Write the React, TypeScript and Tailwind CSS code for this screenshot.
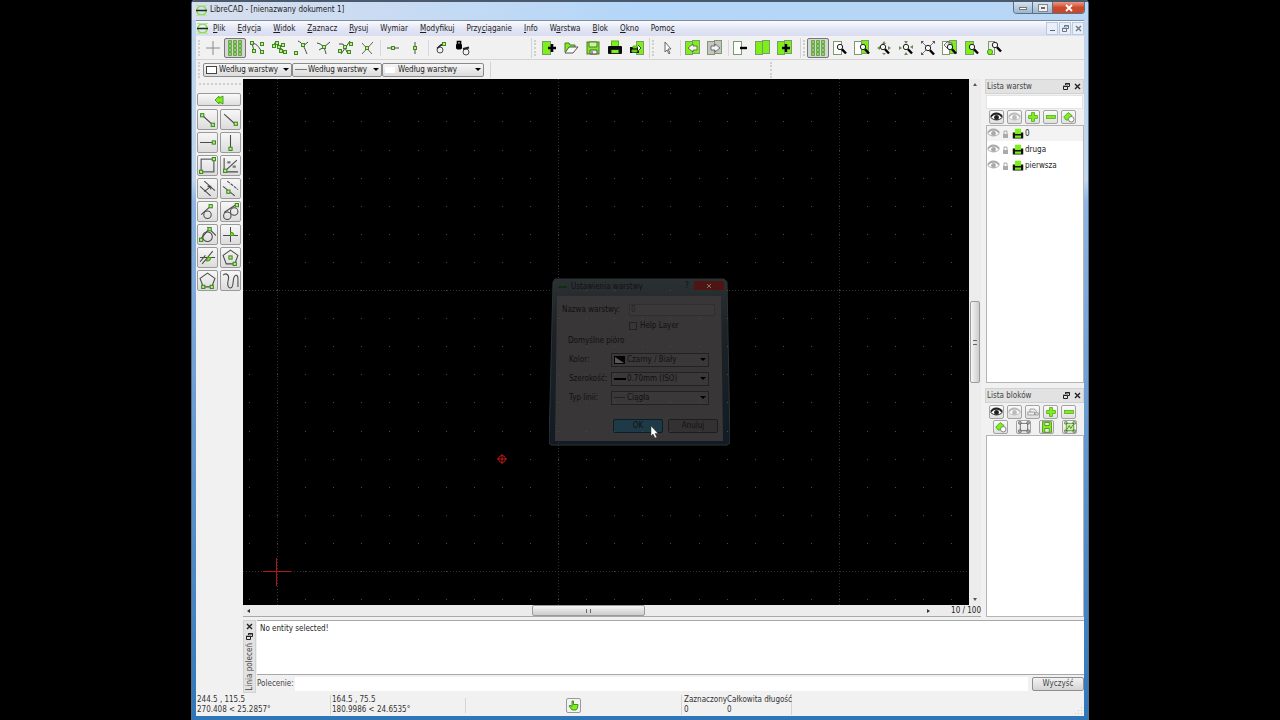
import type { CSSProperties, ReactNode } from 'react'

const LIME = '#7df01a'
const DARK = '#222'

/* ---------- icon parts ---------- */

function Icon({ size = 16, children }: { size?: number; children: ReactNode }) {
  return (
    <svg width={size} height={size} viewBox="0 0 16 16" fill="none" stroke="#4a4a4a" strokeWidth="1" className="shrink-0" aria-hidden="true">
      {children}
    </svg>
  )
}

function Nodes({ at }: { at: number[][] }) {
  return (
    <g fill="#b9f08c" stroke="#3f8a1e">
      {at.map(([x, y]) => (
        <rect key={`${x}-${y}`} x={x - 1.5} y={y - 1.5} width="3" height="3" />
      ))}
    </g>
  )
}

function Lens({ x = 6, y = 4 }: { x?: number; y?: number }) {
  return (
    <g transform={`translate(${x} ${y})`}>
      <circle cx="3" cy="3" r="2.7" fill="#f4f4f4" stroke="#222" />
      <path d="M5 5.2 9 9.5" stroke="#000" strokeWidth="2.4" />
    </g>
  )
}

const Sheet = ({ x = 1, y = 1, w = 10, fill = LIME }: { x?: number; y?: number; w?: number; fill?: string }) => (
  <rect x={x + 0.5} y={y + 0.5} width={w} height="13" fill={fill} stroke="#7d9a6c" />
)

const gridIcon = (
  <Icon>
    <g fill="#b9f08c" stroke="#4d9a2a">
      {[0, 1, 2].flatMap(c => [0, 1, 2, 3].map(r => (
        <rect key={`${c}${r}`} x={1.7 + c * 5} y={0.7 + r * 4} width="2.6" height="2.6" />
      )))}
    </g>
  </Icon>
)

const printerIcon = (
  <Icon>
    <rect x="4.5" y="1" width="7" height="7" fill={LIME} stroke="#58b014" />
    <path d="M2 7h12v6H2z" fill="#0b0b0b" stroke="#0b0b0b" strokeWidth="2" strokeLinejoin="round" />
    <rect x="4" y="9.5" width="8" height="4" fill={LIME} stroke="#222" />
  </Icon>
)

const arrow = (d: string, fill: string) => <path d={d} fill={fill} stroke="#555" strokeWidth="0.8" />

/* ---------- toolbar icons ---------- */

const SNAP: (ReactNode | 'sep')[] = [
  <Icon><path d="M8 1v14M1 8h14" stroke="#888" /></Icon>,
  gridIcon,
  <Icon><path d="M3 3c6 1 7 5 10 9M3 3c1 3 1 5 2 8" /><Nodes at={[[3, 3], [13, 4], [5, 11], [13, 12]]} /></Icon>,
  <Icon><path d="M3 3c6 2 7 6 11 10" /><Nodes at={[[3, 6], [6, 3], [8, 7], [12, 5], [10, 11], [14, 12]]} /></Icon>,
  <Icon><path d="M5 1c5 2 6 6 9 13M15 2 9 7" /><Nodes at={[[3, 13], [10, 5]]} /></Icon>,
  <Icon><path d="M2 3c6 1 8 6 9 11M15 2 9 7l-5 3" /><Nodes at={[[9, 7]]} /></Icon>,
  <Icon><path d="M2 4h4l5 10M13 1 4 14" /><Nodes at={[[8, 7], [14, 4], [3, 11], [12, 12]]} /></Icon>,
  <Icon><path d="m3 3 10 11M14 2 3 14" stroke="#666" /><Nodes at={[[8, 8]]} /></Icon>,
  'sep',
  <Icon><path d="M2 8h12" /><Nodes at={[[8, 8]]} /></Icon>,
  <Icon><path d="M8 2v12" /><Nodes at={[[8, 8]]} /></Icon>,
  'sep',
  <Icon><circle cx="7" cy="10" r="3" /><path d="M4 8.500c2-2 4-4 7-5" stroke="#222" strokeWidth="1.500" /><Nodes at={[[11, 4]]} /></Icon>,
  <Icon>
    <rect x="1.500" y="4" width="5" height="5" rx="1" fill="#000" stroke="#000" />
    <path d="M2.500 4V1.500h3V4" stroke="#000" strokeWidth="1.600" />
    <circle cx="11" cy="12" r="3" /><path d="m8 9 6-1.500" stroke="#222" strokeWidth="2" />
  </Icon>,
]

const FILE: ReactNode[] = [
  <Icon><Sheet x={1} w={8} /><path d="M7 8h8M11 4v8" stroke="#000" strokeWidth="2.6" /></Icon>,
  <Icon><path d="M2 12V3h4l1 2h5v2" fill={LIME} stroke="#4c7b26" /><path d="m2 13 4-6h9l-5 6z" fill="#fafafa" stroke="#555" /></Icon>,
  <Icon><rect x="2" y="2" width="12" height="12" fill={LIME} stroke="#4c7b26" /><path d="M4 2h8v5H4z" fill="#c9f59f" stroke="#4c7b26" /><path d="M5 10h7v4H5z" fill="#eee" stroke="#555" /><path d="M7 11v3" /></Icon>,
  printerIcon,
  <Icon><Sheet x={7} w={7} /><path d="M2 8h7v4H2z" fill="#111" stroke="#111" strokeWidth="2" /><path d="M4 6h4v2H4zM3 10h5v2H3z" fill={LIME} stroke="#58b014" /><path d="m9 5 3 3-3 3" fill="#fff" /></Icon>,
]

const EDIT: (ReactNode | 'sep')[] = [
  <Icon><path d="M6 2v10l2-2 2 4 1-1-2-4h3z" fill="#fff" stroke="#666" /></Icon>,
  'sep',
  <Icon><Sheet x={0} w={7} /><Sheet x={7} y={0} w={7} />{arrow('M3 8l5-4v2h4v4H8v2z', '#f4f4f4')}</Icon>,
  <Icon><Sheet x={0} w={7} fill="#c4c4c4" /><Sheet x={7} y={0} w={7} fill="#c4c4c4" />{arrow('M13 8 8 4v2H4v4h4v2z', '#f4f4f4')}</Icon>,
  'sep',
  <Icon><Sheet x={0} w={8} fill="#fff" /><path d="M7 8h7" stroke="#000" strokeWidth="2.4" /></Icon>,
  <Icon><Sheet x={0} w={7} /><Sheet x={7} y={0} w={7} /></Icon>,
  <Icon><Sheet x={0} w={7} /><Sheet x={7} y={0} w={7} /><path d="M5 8h8M9 4v8" stroke="#000" strokeWidth="2.4" /></Icon>,
]

const VIEW: ReactNode[] = [
  gridIcon,
  <Icon><Sheet x={1} w={8} fill="#fff" /><Lens x={5} /></Icon>,
  <Icon><Sheet x={0} w={7} fill="#fff" /><Sheet x={7} y={0} w={7} /><Lens x={6} /></Icon>,
  <Icon><path d="m8 1-2 3h4zM1 8l3-2v4zM15 8l-3-2v4zM8 15l-2-2h4z" fill="#6a8f4c" stroke="none" /><Lens x={4} /></Icon>,
  <Icon><path d="M8 4 6 1h4zM4 8 1 6v4zM12 7l3-2v4zM8 12l-2 3h4z" fill="#6a8f4c" stroke="none" /><Lens x={5} /></Icon>,
  <Icon><path d="m2 2 12 12M14 2 2 14" stroke="#777" /><path d="M1 1h3L1 4zM15 1v3l-3-3zM1 15v-3l3 3z" fill="#555" stroke="none" /><Lens x={5} y={5} /></Icon>,
  <Icon><Sheet x={0} w={7} fill="#fff" /><Sheet x={7} y={0} w={7} />{arrow('M2 5l4-4v2h4v4H6v2z', '#eee')}<Lens x={5} /></Icon>,
  <Icon><Sheet x={1} w={8} /><Lens x={5} /></Icon>,
  <Icon><Sheet x={2} w={6} fill="#eee" /><circle cx="4" cy="12" r="2.6" fill={LIME} stroke="#4c9a1e" /><Lens x={6} y={2} /></Icon>,
]

const DRAW: { name: string; icon: ReactNode }[] = [
  { name: 'Linia', icon: <><path d="m3 4 10 9" /><Nodes at={[[3, 4], [13, 13]]} /></> },
  { name: 'Linia pod kątem', icon: <><path d="m2 3 10 9" /><Nodes at={[[13, 12]]} /></> },
  { name: 'Pozioma', icon: <><path d="M1 8h13" /><Nodes at={[[14, 8]]} /></> },
  { name: 'Pionowa', icon: <><path d="M8 1v12" /><Nodes at={[[8, 14]]} /></> },
  { name: 'Prostokąt', icon: <><rect x="2" y="2" width="12" height="12" /><Nodes at={[[14, 2], [2, 14]]} /></> },
  { name: 'Dwusieczna', icon: <><path d="M2 1v13h13M2 14 14 3" /><path d="M5 5h3M10 9h3" strokeWidth="2" stroke="#777" /><Nodes at={[[3, 13]]} /></> },
  { name: 'Równoległa', icon: <><path d="m1 6 10 9M5 1l10 9M5 11l6-5M8 6h3v3" /></> },
  { name: 'Równoległa przez punkt', icon: <><path d="m1 6 11 9" /><path d="m5 1 10 8" strokeDasharray="3 1" /><Nodes at={[[6, 11]]} /></> },
  { name: 'Styczna', icon: <><circle cx="8" cy="11" r="3.5" /><path d="m2 11 9-8" /><Nodes at={[[11, 3]]} /></> },
  { name: 'Styczna do okręgów', icon: <><circle cx="5" cy="12" r="3.5" /><circle cx="11.500" cy="8" r="3.5" /><path d="m2 9 12-8" /><Nodes at={[[14, 2]]} /></> },
  { name: 'Styczna prostopadła', icon: <><circle cx="8" cy="10" r="4.5" /><path d="m1 13 9-11M8 1l8 8" /><Nodes at={[[2, 13], [10, 3]]} /></> },
  { name: 'Prostopadła', icon: <><path d="M1 9h14M8 1v14" /><path d="M8 6a3 3 0 0 1 3 3H8z" fill={LIME} stroke="#4c9a1e" /></> },
  { name: 'Względny kąt', icon: <><path d="M1 8h14M3 14 13 2M1 12l5-6" /><path d="M8 8h3a3 3 0 0 1-4 3z" fill={LIME} stroke="#4c9a1e" /></> },
  { name: 'Wielokąt środek', icon: <><path d="m8 1 7 5-3 8H4L1 6z" /><Nodes at={[[8, 8], [12, 14]]} /></> },
  { name: 'Wielokąt krawędź', icon: <><path d="m8 1 7 5-3 8H4L1 6z" /><Nodes at={[[4, 14], [12, 14]]} /></> },
  { name: 'Odręczna', icon: <path d="M1 3c3-3 6 0 5 4s-1 8 2 8 2-5 3-9 4-4 4 0v8" /> },
]

const eye = (color: string) => (
  <Icon size={13}>
    <path d="M1 8c3-5 10-6 14 0-4 4-10 4-14 0z" fill="#fff" stroke={color} strokeWidth="1.2" />
    <path d="M1 7c3-5 10-6 14 0" stroke={color} strokeWidth="2" />
    <circle cx="8" cy="8" r="3" fill={color} stroke="none" />
  </Icon>
)
const plus = <Icon size={12}><path d="M6 2h4v4h4v4h-4v4H6v-4H2V6h4z" fill={LIME} stroke="#55a51c" /></Icon>
const minus = <Icon size={12}><rect x="2" y="6" width="12" height="4" fill={LIME} stroke="#55a51c" /></Icon>
const modify = <Icon size={12}><path d="m1 8 6-6 5 4-3 6H4z" fill={LIME} stroke="#4a8f1c" /><circle cx="11" cy="11" r="3.6" fill="#fff" stroke="#666" /></Icon>
const rename = <Icon size={12}><path d="M1 8h9v4H1zM4 8V4h6l3 4M11 9h4v3h-4z" fill="#eee" stroke="#888" /></Icon>
const editBlock = <Icon size={12}><rect x="3" y="3" width="10" height="10" /><path d="M1 1h3v3H1zM12 1h3v3h-3zM1 12h3v3H1zM12 12h3v3h-3z" fill="#ddd" /></Icon>
const saveBlock = <Icon size={12}><rect x="2" y="1" width="12" height="14" fill={LIME} stroke="#4c7b26" /><path d="M5 2h6v4H5zM5 10h6v5H5z" fill="#dff5cc" stroke="#4c7b26" /></Icon>
const insertBlock = <Icon size={12}><rect x="3" y="3" width="10" height="10" fill="#c8f3a0" stroke="#3f8a1e" /><path d="m4 11 3-5 2 4 3-5M1 1h3v3H1zM12 1h3v3h-3zM1 12h3v3H1zM12 12h3v3h-3z" stroke="#3f6a1e" /></Icon>

/* ---------- small controls ---------- */

function Handle() {
  return <div className="mx-[2px] h-4 w-0 border-l-2 border-dotted border-[#cfcfcf]" />
}

function ToolButton({ label, pressed, children }: { label: string; pressed?: boolean; children: ReactNode }) {
  return (
    <button
      aria-label={label}
      className={`flex h-5 w-[22px] shrink-0 items-center justify-center ${pressed ? 'rounded-xs border border-[#777] bg-[#d6d6d6]' : ''}`}
    >
      {children}
    </button>
  )
}

function ToolGroup({ name, items, pressed }: { name: string; items: (ReactNode | 'sep')[]; pressed?: number }) {
  return (
    <div className="flex items-center" role="toolbar" aria-label={name}>
      {items.map((item, i) =>
        item === 'sep'
          ? <div key={i} className="mr-px ml-[2px] h-4 border-l border-[#d8d8d8]" />
          : <ToolButton key={i} label={`${name} ${i + 1}`} pressed={i === pressed}>{item}</ToolButton>
      )}
    </div>
  )
}

function PenSelect({ label, className, swatch }: { label: string; className: string; swatch: ReactNode }) {
  return (
    <div className={`relative ${className}`}>
      <select aria-label={label} className="block h-[14px] w-full appearance-none rounded-xs border border-[#8a8a8a] bg-linear-to-b from-[#f6f6f6] to-[#dcdcdc] pl-[15px] leading-[12px]">
        <option>Według warstwy</option>
      </select>
      <span className="pointer-events-none absolute inset-y-0 left-[3px] flex items-center">{swatch}</span>
      <span className="pointer-events-none absolute top-[5px] right-[3px] border-x-[3px] border-t-[3px] border-x-transparent border-t-black" />
    </div>
  )
}

function SmallButton({ label, children }: { label: string; children: ReactNode }) {
  return (
    <button aria-label={label} className="flex h-[14px] w-[15px] items-center justify-center rounded-xs border border-[#a3a3a3] bg-linear-to-b from-[#fbfbfb] to-[#e0e0e0]">
      {children}
    </button>
  )
}

function DockTitle({ children }: { children: ReactNode }) {
  return (
    <div className="flex h-[15px] shrink-0 items-center border border-[#d2d2d2] bg-[#e2e2e2] pl-px text-[#444]">
      <h2 className="flex-1">{children}</h2>
      <button aria-label="Odepnij" className="px-[2px]"><RestoreGlyph /></button>
      <button aria-label="Zamknij" className="px-[2px]"><CloseGlyph /></button>
    </div>
  )
}

const RestoreGlyph = ({ color = DARK }: { color?: string }) => (
  <svg width="7" height="7" viewBox="0 0 7 7" fill="none" stroke={color} aria-hidden="true">
    <path d="M2.5 2V.5h4v3H5M2 1h5M.5 3.5h4v3h-4zM0 3.2h5" />
  </svg>
)
const CloseGlyph = ({ color = DARK }: { color?: string }) => (
  <svg width="7" height="7" viewBox="0 0 7 7" fill="none" stroke={color} strokeWidth="1.4" aria-hidden="true">
    <path d="m1 1 5 5M6 1 1 6" />
  </svg>
)
const Logo = () => (
  <svg width="13" height="13" viewBox="0 0 13 13" fill="none" aria-hidden="true">
    <circle cx="6.5" cy="6.5" r="4.6" stroke="#8fd65a" strokeWidth="1.6" />
    <path d="M1 1.5h11M1 11.5h11" stroke="#b4e88e" />
    <path d="M1 6.5h11" stroke="#1a3010" strokeWidth="1.6" />
  </svg>
)

/* ---------- window sections ---------- */

function TitleBar() {
  return (
    <header className="flex h-[20px] shrink-0 items-start border-t-2 border-[#4a5a6c] bg-linear-to-r from-[#d8dfee] via-[#b4d6f8] to-[#b9d6f4] px-[3px]">
      <div className="flex h-4 flex-1 items-center gap-[2px]">
        <Logo />
        <h1>LibreCAD - [nienazwany dokument 1]</h1>
      </div>
      <div className="flex h-[12px] overflow-hidden rounded-b-sm border border-t-0 border-[#5c7188]">
        <button aria-label="Minimalizuj" className="flex w-[19px] items-end justify-center border-r border-[#5c7188] bg-linear-to-b from-[#d3e2f1] to-[#9bb6d0] pb-[3px]">
          <span className="h-[3px] w-2 border border-[#777] bg-white" />
        </button>
        <button aria-label="Maksymalizuj" className="flex w-[20px] items-center justify-center border-r border-[#5c7188] bg-linear-to-b from-[#d3e2f1] to-[#9bb6d0]">
          <span className="h-[6px] w-2 border-2 border-[#eee] bg-[#667] outline outline-[#888]" />
        </button>
        <button aria-label="Zamknij" className="flex w-[31px] items-center justify-center bg-linear-to-b from-[#e59a85] via-[#cf4a2d] to-[#c6482a]">
          <svg width="8" height="8" viewBox="0 0 8 8" stroke="#fff" strokeWidth="1.8" aria-hidden="true"><path d="m1 1 6 6M7 1 1 7" /></svg>
        </button>
      </div>
    </header>
  )
}

// [text, index of the underlined mnemonic]
const MENUS: [string, number][] = [
  ['Plik', 0], ['Edycja', 0], ['Widok', 0], ['Zaznacz', 0], ['Rysuj', 0], ['Wymiar', -1], ['Modyfikuj', 0],
  ['Przyciąganie', 4], ['Info', 0], ['Warstwa', 1], ['Blok', 0], ['Okno', 0], ['Pomoc', 4],
]

function MenuBar() {
  const mdi = 'flex h-[13px] w-[12px] items-center justify-center border border-[#b9cbdf] bg-[#e9f0f9]'
  return (
    <nav className="flex h-[15px] shrink-0 items-center bg-linear-to-b from-[#fbfbfe] via-[#e3e6f5] to-[#d9ddf0]">
      <Logo />
      <div className="ml-1 flex flex-1 gap-3">
        {MENUS.map(([text, i]) => (
          <button key={text}>
            {i < 0 ? text : <>{text.slice(0, i)}<u>{text[i]}</u>{text.slice(i + 1)}</>}
          </button>
        ))}
      </div>
      <div className="flex gap-px">
        <button aria-label="Minimalizuj dokument" className={mdi}><span className="mt-1 h-px w-[5px] bg-[#567]" /></button>
        <button aria-label="Przywróć dokument" className={mdi}><RestoreGlyph color="#6b7683" /></button>
        <button aria-label="Zamknij dokument" className={mdi}><CloseGlyph color="#6b7683" /></button>
      </div>
    </nav>
  )
}

function Toolbars() {
  return (
    <>
      <div className="flex h-6 shrink-0 items-center overflow-hidden border-b border-[#d3d3d3]">
        <div className="flex w-[335px] shrink-0 items-center"><Handle /><ToolGroup name="Przyciąganie" items={SNAP} pressed={1} /></div>
        <div className="flex w-[118px] shrink-0 items-center border-l border-[#d3d3d3]"><Handle /><ToolGroup name="Plik" items={FILE} /></div>
        <div className="flex w-[151px] shrink-0 items-center border-l border-[#d3d3d3]"><Handle /><ToolGroup name="Edycja" items={EDIT} /></div>
        <div className="flex shrink-0 items-center border-l border-[#d3d3d3]"><Handle /><ToolGroup name="Widok" items={VIEW} pressed={0} /></div>
      </div>
      <div className="flex h-[19px] shrink-0 items-center overflow-hidden">
        <div className="flex w-[295px] shrink-0 items-center border-r border-[#d3d3d3]">
          <Handle />
          <PenSelect label="Kolor" className="ml-px w-[89px]" swatch={<span className="h-2 w-[11px] border border-[#444] bg-white" />} />
          <PenSelect label="Szerokość" className="w-[90px]" swatch={<span className="h-px w-3 bg-[#777]" />} />
          <PenSelect label="Typ linii" className="w-[102px]" swatch={<span className="h-[6px] w-[10px] bg-white" />} />
        </div>
        <div className="w-[277px]" />
        <Handle />
      </div>
    </>
  )
}

function DrawTools() {
  return (
    <aside className="flex w-[47px] shrink-0 flex-col pt-1 pl-px">
      <div className="mx-[2px] h-0 border-t-2 border-dotted border-[#cfcfcf]" />
      <button aria-label="Wstecz" className="mt-2 flex h-[13px] w-[44px] items-center justify-center rounded-xs border border-[#9a9a9a] bg-linear-to-b from-[#fafafa] to-[#dedede]">
        <svg width="10" height="10" viewBox="0 0 10 10" fill={LIME} stroke="#3f8a1e" strokeWidth="0.800" aria-hidden="true"><path d="m1 5 4-4v2l4-2v8L5 7v2z" /></svg>
      </button>
      <div className="mt-[3px] grid w-[44px] grid-cols-2 gap-[2px]">
        {DRAW.map(({ name, icon }) => (
          <button key={name} aria-label={name} className="flex size-[21px] items-center justify-center rounded-xs border border-[#9a9a9a] bg-linear-to-b from-[#f7f7f7] to-[#dcdcdc]">
            <Icon size={17}>{icon}</Icon>
          </button>
        ))}
      </div>
    </aside>
  )
}

// drawing origin and grid step, in canvas pixels
const ORIGIN = { x: 34, y: 492 }
const STEP = 28.1

function Grid() {
  const dots: ReactNode[] = []
  for (let c = -1; c < 60; c++) {
    for (let r = -20; r < 18; r++) {
      dots.push(<rect key={`${c},${r}`} x={Math.round(ORIGIN.x + c * STEP)} y={Math.round(ORIGIN.y - r * STEP)} width="1" height="1" />)
    }
  }
  const majors = [0, 10, 20, 30, 40]
  return (
    <svg className="pointer-events-none absolute inset-0 size-full" aria-hidden="true">
      <g fill="#4a4a4a">{dots}</g>
      <g stroke="#303030" strokeDasharray="1 2">
        {majors.map(m => <line key={`v${m}`} x1={Math.round(ORIGIN.x + m * STEP) + 0.5} x2={Math.round(ORIGIN.x + m * STEP) + 0.5} y1="0" y2="100%" />)}
        {majors.slice(0, 2).map(m => <line key={`h${m}`} y1={Math.round(ORIGIN.y - m * STEP) + 0.5} y2={Math.round(ORIGIN.y - m * STEP) + 0.5} x1="0" x2="100%" />)}
      </g>
      <path d="M33.500 479v28M20 492.500h28" stroke="#b01818" />
      <g stroke="#d01818" strokeWidth="0.900" fill="none"><circle cx="259" cy="380" r="3.500" /><path d="M259 375v10M254 380h10" /></g>
    </svg>
  )
}

function FadedSelect({ id, label, value, swatch }: { id: string; label: string; value: string; swatch: ReactNode }) {
  return (
    <div className="flex h-[19px] items-center pl-[13px]">
      <label htmlFor={id} className="w-[42px] whitespace-nowrap">{label}</label>
      <div className="relative w-[98px]">
        <select id={id} className="block h-[14px] w-full appearance-none border border-[#232122] bg-[#3b3839] pl-[15px] leading-[12px]">
          <option>{value}</option>
        </select>
        <span className="pointer-events-none absolute inset-y-0 left-[3px] flex items-center">{swatch}</span>
        <span className="pointer-events-none absolute top-[5px] right-[3px] border-x-[3px] border-t-[3px] border-x-transparent border-t-black" />
      </div>
    </div>
  )
}

function LayerDialog() {
  return (
    <section role="dialog" aria-label="Ustawienia warstwy" className="absolute top-[199px] left-[306px] h-[168px] w-[181px] text-[#111]">
      {/* frame leans outwards while the dialog fades away */}
      <svg className="absolute inset-0" width="181" height="168" viewBox="0 0 181 168" aria-hidden="true">
        <defs>
          <linearGradient id="frame" x2="0" y2="1">
            <stop offset="0" stopColor="#2b3133" />
            <stop offset="0.3" stopColor="#1c2226" />
            <stop offset="1" stopColor="#121b24" />
          </linearGradient>
        </defs>
        <path d="M6 1h169l3 3 3 161-3 2H2l-2-2L4 4z" fill="url(#frame)" stroke="#2c3437" />
        <path d="M8 18h164l2 145H6z" fill="#393637" />
      </svg>
      <div className="relative">
        <div className="flex h-[18px] items-start pt-[3px] pr-[6px] pl-[9px]">
          <span className="mt-[5px] mr-1 h-[2px] w-[9px] bg-[#0b3210]" />
          <h2 className="flex-1">Ustawienia warstwy</h2>
          <button aria-label="Pomoc" className="h-[9px] w-[14px] leading-[9px]">?</button>
          <button aria-label="Zamknij" className="flex h-[9px] w-[30px] items-center justify-center bg-[#4f1512]">
            <svg width="6" height="6" viewBox="0 0 6 6" stroke="#777" aria-hidden="true"><path d="m1 1 4 4M5 1 1 5" /></svg>
          </button>
        </div>
        <div className="mt-[7px] flex h-[14px] items-center pl-[13px]">
          <label htmlFor="layer-name" className="w-[67px] whitespace-nowrap">Nazwa warstwy:</label>
          <input id="layer-name" defaultValue="0" className="h-3 w-[86px] border border-[#302e2f] bg-[#3b3839] pl-px text-[#252324]" />
        </div>
        <div className="mt-[3px] flex h-3 items-center pl-[80px]">
          <input id="help-layer" type="checkbox" className="size-2 appearance-none border border-[#232122]" />
          <label htmlFor="help-layer" className="pl-[3px]">Help Layer</label>
        </div>
        <p className="mt-[2px] mb-[2px] h-[14px] pl-[19px] leading-[14px]">Domyślne pióro</p>
        <div className="pl-[7px]">
          <FadedSelect id="pen-color" label="Kolor:" value="Czarny / Biały" swatch={
            <svg width="11" height="8" viewBox="0 0 11 8" aria-hidden="true"><path d="M0 0h11v8H0z" fill="#050505" /><path d="m1 1 9 6H1z" fill="#5a5859" /></svg>
          } />
          <FadedSelect id="pen-width" label="Szerokość:" value="0.70mm (ISO)" swatch={<span className="h-[2px] w-3 bg-black" />} />
          <FadedSelect id="pen-type" label="Typ linii:" value="Ciągła" swatch={<span className="h-px w-[11px] bg-[#222]" />} />
        </div>
        <div className="mt-3 flex justify-end gap-[5px] pr-[12px]">
          <button className="h-[14px] w-[50px] rounded-xs border border-[#0b1f29] bg-[#1f3a47]">OK</button>
          <button className="h-[14px] w-[50px] rounded-xs border border-[#1f1d1e] bg-[#343132]">Anuluj</button>
        </div>
      </div>
      <svg className="absolute top-[147px] left-[101px]" width="9" height="14" viewBox="0 0 9 14" aria-hidden="true">
        <path d="M1 1v10l2-2 2 4 1.800-.8L5 8.500h3z" fill="#fff" stroke="#333" strokeWidth="0.500" />
      </svg>
    </section>
  )
}

function Canvas() {
  return (
    <main className="flex min-w-0 flex-1 flex-col border-b border-[#a8a8a8]">
      <div className="flex min-h-0 flex-1">
        <div className="relative min-w-0 flex-1 overflow-hidden bg-black">
          <LayerDialog />
          <Grid />
        </div>
        <div className="flex w-[12px] shrink-0 flex-col items-center justify-between bg-[#ececec] py-1">
          <span className="border-x-2 border-b-[3px] border-x-transparent border-b-[#555]" />
          <div className="flex h-[82px] w-[10px] items-center justify-center rounded-xs border border-[#9b9b9b] bg-linear-to-r from-[#f5f5f5] to-[#cdcdcd]">
            <span className="h-[5px] w-1 border-y border-[#666]" />
          </div>
          <span className="border-x-2 border-t-[3px] border-x-transparent border-t-[#555]" />
        </div>
      </div>
      <div className="flex h-[11px] shrink-0 items-center bg-[#ececec]">
        <span className="ml-1 border-y-2 border-r-[3px] border-y-transparent border-r-[#333]" />
        <div className="flex flex-1 justify-center">
          <div className="flex h-[11px] w-[113px] items-center justify-center rounded-xs border border-[#9b9b9b] bg-linear-to-b from-[#f5f5f5] to-[#cdcdcd]">
            <span className="h-1 w-[5px] border-x border-[#666]" />
          </div>
        </div>
        <span className="border-y-2 border-l-[3px] border-y-transparent border-l-[#333]" />
        <span className="w-[51px] text-right">10 / 100</span>
      </div>
    </main>
  )
}

const LAYERS = ['0', 'druga', 'pierwsza']

function Docks() {
  return (
    <aside className="flex w-[103px] shrink-0 flex-col pl-1">
      <DockTitle>Lista warstw</DockTitle>
      <input aria-label="Filtr warstw" className="mx-px mt-px h-[14px] border border-[#e4e4e4] bg-white px-1" />
      <div className="flex gap-[3px] pt-px pl-1">
        <SmallButton label="Pokaż warstwy">{eye('#222')}</SmallButton>
        <SmallButton label="Ukryj warstwy">{eye('#bbb')}</SmallButton>
        <SmallButton label="Dodaj warstwę">{plus}</SmallButton>
        <SmallButton label="Usuń warstwę">{minus}</SmallButton>
        <SmallButton label="Zmień warstwę">{modify}</SmallButton>
      </div>
      <ul className="mt-px ml-px h-[258px] space-y-px border border-[#b5b5b5] bg-white">
        {LAYERS.map((name, i) => (
          <li key={name} className={`flex h-[15px] items-center gap-[2px] ${i === 0 ? 'bg-[#f3f3f3]' : ''}`}>
            {eye('#aaa')}
            <svg width="7" height="8" viewBox="0 0 7 8" fill="#aaa" aria-hidden="true"><path d="M1 4h5v4H1z" /><path d="M2 4V1h3v3" fill="none" stroke="#aaa" /></svg>
            <span className="ml-px flex items-center gap-px"><svg width="12" height="12" viewBox="0 0 16 16" aria-hidden="true">
              <path d="M4 1h8v7H4z" fill={LIME} /><path d="M1 6h3v2h8V6h3v8H1z" fill="#111" /><path d="M4 10h8v3H4z" fill={LIME} />
            </svg>{name}</span>
          </li>
        ))}
      </ul>
      <div className="mt-[5px] flex flex-col">
        <DockTitle>Lista bloków</DockTitle>
      </div>
      <div className="flex gap-[3px] pt-[2px] pl-1">
        <SmallButton label="Pokaż bloki">{eye('#222')}</SmallButton>
        <SmallButton label="Ukryj bloki">{eye('#bbb')}</SmallButton>
        <SmallButton label="Zmień nazwę bloku">{rename}</SmallButton>
        <SmallButton label="Dodaj blok">{plus}</SmallButton>
        <SmallButton label="Usuń blok">{minus}</SmallButton>
      </div>
      <div className="flex gap-2 pt-px pl-2">
        <SmallButton label="Zmień blok">{modify}</SmallButton>
        <SmallButton label="Edytuj blok">{editBlock}</SmallButton>
        <SmallButton label="Zapisz blok">{saveBlock}</SmallButton>
        <SmallButton label="Wstaw blok">{insertBlock}</SmallButton>
      </div>
      <ul aria-label="Bloki" className="mt-px ml-px flex-1 border border-[#b5b5b5] bg-white" />
    </aside>
  )
}

function CommandLine() {
  return (
    <section className="flex h-[73px] shrink-0">
      <div className="mr-px flex w-[13px] flex-col items-center gap-[3px] border border-[#d2d2d2] bg-[#e2e2e2] pt-[2px]">
        <button aria-label="Zamknij linię poleceń"><CloseGlyph /></button>
        <button aria-label="Odepnij linię poleceń"><RestoreGlyph /></button>
        <h2 className="rotate-180 leading-[11px] whitespace-nowrap text-[#444] [writing-mode:vertical-rl]">Linia poleceń</h2>
      </div>
      <div className="flex min-w-0 flex-1 flex-col">
        <div role="log" className="flex-1 border-y border-[#a8a8a8] bg-white pt-[2px] pl-[3px]">No entity selected!</div>
        <div className="flex h-[18px] items-center">
          <label htmlFor="command" className="w-[38px] text-[#444]">Polecenie:</label>
          <input id="command" className="h-[14px] min-w-0 flex-1 bg-white" />
          <button className="ml-1 h-[14px] w-[52px] rounded-xs border border-[#8f8f8f] bg-linear-to-b from-[#f3f3f3] to-[#d4d4d4] text-[#444]">Wyczyść</button>
        </div>
      </div>
    </section>
  )
}

function StatusBar() {
  return (
    <footer className="flex h-[23px] shrink-0 items-center pt-px leading-[10px] text-[#333]">
      <p className="w-[134px] pl-px">244.5 , 115.5<br />270.408 &lt; 25.2857°</p>
      <p className="w-[135px] border-l border-[#d5d5d5] pl-px">164.5 , 75.5<br />180.9986 &lt; 24.6535°</p>
      <div className="flex w-[216px] justify-center border-l border-[#d5d5d5]">
        <button aria-label="Wskaźnik" className="flex size-[15px] items-center justify-center rounded-xs border border-[#9a9a9a] bg-[#f3f3f3]">
          <svg width="11" height="11" viewBox="0 0 11 11" fill={LIME} stroke="#2f7a12" strokeWidth="0.800" aria-hidden="true">
            <path d="M4 1h1.500v3.500H10L9.500 8 8 10H4L1 6l1-.8 2 1.300z" />
          </svg>
        </button>
      </div>
      <div className="flex w-[111px] border-x border-[#d5d5d5] pl-[2px] whitespace-nowrap">
        <p className="w-[44px]">Zaznaczony<br />0</p>
        <p>Całkowita długość<br />0</p>
      </div>
      <svg className="mt-3 mr-px ml-auto" width="8" height="8" viewBox="0 0 8 8" fill="#ccc" aria-hidden="true">
        <path d="M6 0h1v1H6zM3 3h1v1H3zM6 3h1v1H6zM0 6h1v1H0zM3 6h1v1H3zM6 6h1v1H6z" />
      </svg>
    </footer>
  )
}

const uiFont: CSSProperties = { fontFamily: '"DejaVu Sans Condensed", "Open Sans", sans-serif' }

export default function App() {
  return (
    <div className="flex min-h-screen justify-center bg-black text-[8px] leading-[12px] text-[#1c1c1c]" style={uiFont}>
      <div className="flex w-full max-w-[898px] flex-col overflow-hidden rounded-t-sm border-x border-[#56708f] bg-linear-to-b from-[#c0d5ee] from-25% via-[#8fb5e2] via-28% to-[#2f76b8]">
        <TitleBar />
        <div className="mx-1 mb-1 flex flex-1 flex-col border-t border-[#7d8ea3] bg-[#f2f1f2]">
          <MenuBar />
          <Toolbars />
          <div className="flex flex-1">
            <DrawTools />
            <div className="flex min-w-0 flex-1 flex-col">
              <div className="flex flex-1">
                <Canvas />
                <Docks />
              </div>
              <div className="mt-[3px]"><CommandLine /></div>
            </div>
          </div>
          <StatusBar />
        </div>
      </div>
    </div>
  )
}
